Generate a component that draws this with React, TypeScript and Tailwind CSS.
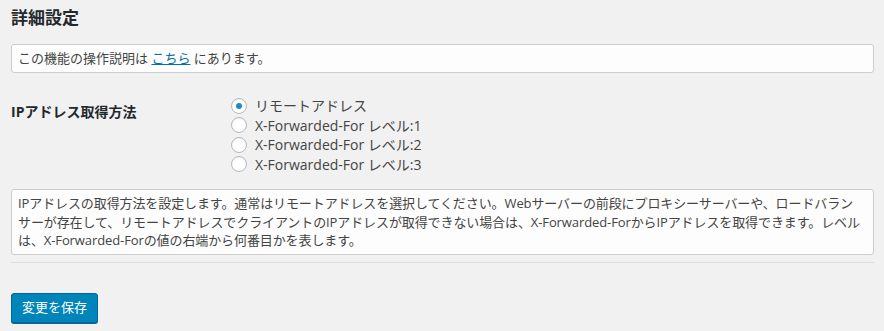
import { useState } from 'react';

const options = [
  'リモートアドレス',
  'X-Forwarded-For レベル:1',
  'X-Forwarded-For レベル:2',
  'X-Forwarded-For レベル:3',
];

const descLines = [
  'IPアドレスの取得方法を設定します。通常はリモートアドレスを選択してください。Webサーバーの前段にプロキシーサーバーや、ロードバラン',
  'サーが存在して、リモートアドレスでクライアントのIPアドレスが取得できない場合は、X-Forwarded-ForからIPアドレスを取得できます。レベル',
  'は、X-Forwarded-Forの値の右端から何番目かを表します。',
];

const Radio = ({ checked }: { checked: boolean }) => (
  <span className="flex h-4 w-4 shrink-0 items-center justify-center rounded-full border border-[#b4b9be] bg-white shadow-[inset_0_1px_2px_rgba(0,0,0,0.07)]">
    {checked && <span className="h-[6px] w-[6px] rounded-full bg-[#1e8cbe]" />}
  </span>
);

const App = () => {
  const [selected, setSelected] = useState(0);

  return (
    <div
      className="min-h-[331px] w-[884px] bg-[#f1f1f1] pl-[11px] pr-[10px] text-[13px] text-[#444]"
      style={{ fontFamily: '"Open Sans", "Noto Sans CJK JP", sans-serif' }}
    >
      <h2 className="pt-[6px] text-[17px] leading-[24px] font-bold text-[#23282d]">詳細設定</h2>

      <div className="mt-[14px] h-[29px] rounded-[3px] border border-[#ccc] bg-[#fdfdfd] px-[6px] leading-[27px]">
        この機能の操作説明は{' '}
        <a href="#" className="text-[#0073aa] underline">こちら</a>{' '}
        にあります。
      </div>

      <div className="mt-[23px] flex">
        <div className="w-[220px] pt-[6px] text-[14px] leading-[20px] font-bold text-[#23282d]">
          IPアドレス取得方法
        </div>
        <div className="flex flex-col">
          {options.map((label, i) => (
            <label
              key={label}
              className="flex h-[19.5px] cursor-pointer items-center gap-[8px] text-[14px]"
              onClick={() => setSelected(i)}
            >
              <Radio checked={selected === i} />
              <span className="leading-[19px]">{label}</span>
            </label>
          ))}
        </div>
      </div>

      <div className="mt-[15px] h-[66px] overflow-hidden rounded-[3px] border border-[#ccc] bg-[#fdfdfd] px-[6px] py-[4px] leading-[18.5px]">
        {descLines.map((line) => (
          <div key={line} className="whitespace-nowrap tracking-[-0.1px]">{line}</div>
        ))}
      </div>

      <hr className="mt-[7px] border-t border-[#ddd]" />

      <button className="mt-[30px] h-[30px] rounded-[3px] border border-[#006799] bg-[#0085ba] px-[10px] text-[13px] text-white shadow-[0_1px_0_#006799]">
        変更を保存
      </button>
    </div>
  );
};

export default App;
